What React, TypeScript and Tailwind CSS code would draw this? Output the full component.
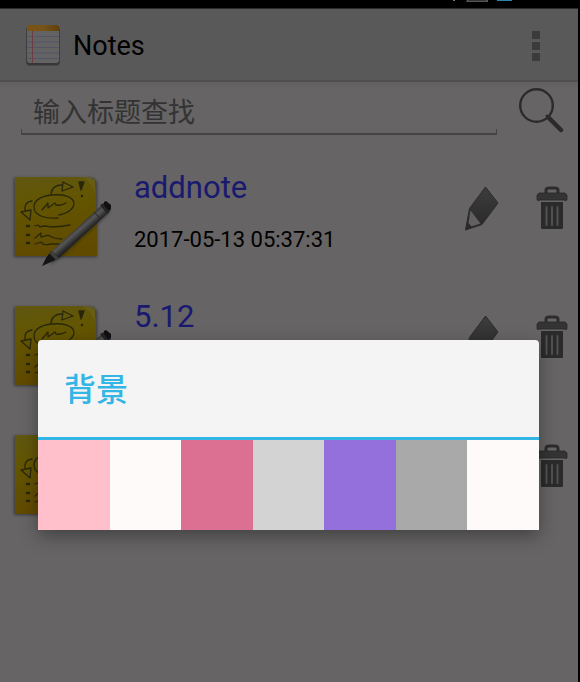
import React from 'react';

type Note = { id: number; title?: string; date?: string };

const notes: Note[] = [
  { id: 1, title: 'addnote', date: '2017-05-13 05:37:31' },
  { id: 2, title: '5.12' },
  { id: 3 },
];

const swatches = [
  { id: 'pink', color: 'bg-[#ffc0cb]' },
  { id: 'snow', color: 'bg-[#fffafa]' },
  { id: 'rose', color: 'bg-[#db7093]' },
  { id: 'light-gray', color: 'bg-[#d3d3d3]' },
  { id: 'purple', color: 'bg-[#9370db]' },
  { id: 'gray', color: 'bg-[#a9a9a9]' },
  { id: 'default', color: 'bg-[#fffafa]' },
];

function StatusBar() {
  return (
    <div className="flex h-[9px] justify-end border-b border-[#2a2a2a] bg-black pr-16">
      <svg width="64" height="3" viewBox="0 0 64 3" aria-hidden="true">
        <path d="M3 0h2v1H3z" fill="#777" />
        <path d="M17 0h21v2H16z" fill="#555" />
        <path d="M19 0h17v1H18z" fill="#333" />
        <path d="M47 0h15v1H47z" fill="#2a85a8" />
      </svg>
    </div>
  );
}

function AppIcon() {
  return (
    <svg width="36" height="44" viewBox="0 0 36 44" aria-hidden="true">
      <defs>
        <linearGradient id="binding" x1="0" x2="1" y1="0" y2="0">
          <stop offset="0" stopColor="#7a5410" />
          <stop offset="0.5" stopColor="#76531a" />
          <stop offset="1" stopColor="#60400d" />
        </linearGradient>
      </defs>
      <rect x="1" y="3" width="34" height="39" rx="4" fill="#484848" />
      <rect x="1.5" y="2" width="33" height="39" rx="3" fill="#303030" opacity="0.7" />
      <rect x="2" y="2" width="32" height="37" rx="3" fill="#636363" />
      <path d="M2 7V4q0-3 3-3h26q3 0 3 3v3z" fill="url(#binding)" />
      <path d="M2 12.500h32M2 18h32M2 23.500h32M2 29h32M2 34.500h32" stroke="#545468" strokeWidth="1" />
      <path d="M7.500 7v32" stroke="#6c3c42" strokeWidth="1" />
    </svg>
  );
}

function NoteIcon() {
  return (
    <svg width="110" height="100" viewBox="0 0 110 100" aria-hidden="true">
      <defs>
        <linearGradient id="paper" x1="0" x2="0.15" y1="0" y2="1">
          <stop offset="0" stopColor="#605711" />
          <stop offset="0.4" stopColor="#635500" />
          <stop offset="1" stopColor="#604a00" />
        </linearGradient>
        <linearGradient id="barrel" gradientUnits="userSpaceOnUse" x1="68" y1="60" x2="75" y2="68">
          <stop offset="0" stopColor="#303030" />
          <stop offset="0.4" stopColor="#565656" />
          <stop offset="1" stopColor="#222" />
        </linearGradient>
        <filter id="soft" x="-10%" y="-10%" width="120%" height="125%">
          <feGaussianBlur stdDeviation="1.5" />
        </filter>
      </defs>
      <path d="M6 11h79l4 4v75H6z" fill="#333" opacity="0.85" filter="url(#soft)" />
      <path d="M7 10h68q11 0 12 4 2 36 2 75H7z" fill="url(#paper)" />
      <path d="M74 10q11 0 13 4l1 16q-3-14-14-20z" fill="#6d6420" opacity="0.5" />
      <g fill="none" stroke="#29270b" strokeWidth="1.300" strokeLinecap="round" strokeLinejoin="round">
        <path d="M51 48q14-3 15-11c0-8-12-10-22-9-12 1-18 6-18 12 0 9 12 12 24 11" />
        <path d="M34 43l6-7v5l7-5 1 2q5 1 10-2M43 27q1-9 11-9" />
        <path d="M55 15l10 5-11 4zM24 34q-8 1-7 9M13 45l10-2-1 10z" />
        <path d="M27 59l3-1 2 2q5-2 10 0 10 0 20-2M27 71l6-5v4l7-2q6 4 14 4M27 77l6-2q2 4 9 2h9" />
        <path d="M19 59h2M19 68h2M19 76h2" strokeWidth="2.500" />
        <path d="M71 15h5l-3 8z" fill="#29270b" />
        <path d="M74 29h0" strokeWidth="2.500" />
      </g>
      <path d="M44 88l52-48 6 5-50 46-9 6z" fill="#171717" opacity="0.6" filter="url(#soft)" />
      <path d="M44 84l50-46 7 7-50 46z" fill="url(#barrel)" />
      <path d="M86 45l7 7" stroke="#242424" strokeWidth="1" />
      <path d="M92 38l4-2 7 7-4 4z" fill="#242424" />
      <path d="M96 35l2-1 5 4v4l-3 1-4-5z" fill="#101010" />
      <path d="M43 84l8 7-8 4-9 4 4-8z" fill="#141414" />
      <path d="M43 84l8 7-3 2-7-7z" fill="#3e3e3e" />
    </svg>
  );
}

function PencilIcon() {
  return (
    <svg width="36" height="48" viewBox="0 0 36 48" aria-hidden="true">
      <defs>
        <linearGradient id="metal" x1="0" x2="0" y1="0" y2="1">
          <stop offset="0" stopColor="#3d3d3d" />
          <stop offset="1" stopColor="#282828" />
        </linearGradient>
      </defs>
      <path d="M21.500 2L34 18 18 39.500 1.500 45 5.500 23.500z" fill="url(#metal)" stroke="#2b2b2b" strokeLinejoin="round" />
      <path d="M6.500 25.500L16.500 38.500l-9 3-3-3.500z" fill="#626060" />
    </svg>
  );
}

function TrashIcon() {
  return (
    <svg width="32" height="46" viewBox="0 0 32 46" aria-hidden="true">
      <path d="M10 9V5.500Q10 3 13 3h6q3 0 3 2.500V9" fill="none" stroke="#2d2d2d" strokeWidth="3" />
      <path d="M3 8h26l2 2v5q-1 1-3 0H4q-2 1-3 0v-5z" fill="#343434" stroke="#292929" strokeWidth="0.8" />
      <path d="M5 17h22v26q0 1-1 1H6q-1 0-1-1z" fill="#2b2b2b" />
      <path d="M10.500 22v18M16 22v18M21.500 22v18" stroke="#525151" strokeWidth="2" strokeLinecap="round" />
    </svg>
  );
}

function SearchIcon() {
  return (
    <svg width="46" height="48" viewBox="0 0 46 48" fill="none" stroke="#2b2b2b" strokeLinecap="round" aria-hidden="true">
      <circle cx="18.500" cy="18.500" r="16.300" strokeWidth="2.400" />
      <path d="M31 31l12 12" strokeWidth="4.500" />
      <path d="M29 29l3 3" strokeWidth="3" />
    </svg>
  );
}

function NoteRow({ note }: { note: Note }) {
  return (
    <li className="flex h-[129px] items-start pr-[10px]">
      <div className="ml-2 mt-[10px] shrink-0">
        <NoteIcon />
      </div>
      <div className="ml-4 mt-[13px] min-w-0 flex-1">
        {note.title && <h2 className="text-[31px] leading-9 text-[#191970]">{note.title}</h2>}
        {note.date && <p className="mt-[18px] text-[22px] leading-8 text-black">{note.date}</p>}
      </div>
      <button type="button" aria-label="Edit" className="mt-7">
        <PencilIcon />
      </button>
      <button type="button" aria-label="Delete" className="ml-9 mt-7">
        <TrashIcon />
      </button>
    </li>
  );
}

function BackgroundDialog() {
  return (
    <div
      role="dialog"
      aria-labelledby="dialog-title"
      className="absolute left-[38px] right-[39px] top-[340px] overflow-hidden rounded-t-sm bg-[#f4f4f4] shadow-[0_6px_18px_rgba(0,0,0,0.35)]"
    >
      <h2
        id="dialog-title"
        className="flex h-[100px] items-center border-b-[3px] border-[#33b5e5] px-[26px] pt-[2px] text-[32px] font-medium text-[#33b5e5]"
      >
        背景
      </h2>
      <div className="flex h-[90px]">
        {swatches.map((s) => (
          <button key={s.id} type="button" aria-label={s.id} className={`flex-1 ${s.color}`} />
        ))}
      </div>
    </div>
  );
}

export default function App() {
  return (
    <div className="relative min-h-screen border-r-2 border-black bg-[#666464] font-[Roboto,'Noto_Sans_CJK_SC',sans-serif]">
      <StatusBar />
      <header className="flex h-[73px] items-center border-b-2 border-[#504e4e] bg-[#595959] pl-[25px] pr-[30px] pt-[2px]">
        <AppIcon />
        <h1 className="ml-3 flex-1 text-[27px] leading-8 text-black">Notes</h1>
        <button type="button" aria-label="Menu" className="flex w-6 flex-col items-center gap-[3px]">
          <span className="size-2 bg-[#3b3b3b]" />
          <span className="size-2 bg-[#3b3b3b]" />
          <span className="size-2 bg-[#3b3b3b]" />
        </button>
      </header>
      <main>
        <div className="flex h-[75px] items-start bg-linear-to-b from-[#615f5f] to-[#666464] to-10% pl-[21px] pr-[14px]">
          <div className="mt-2 min-w-0 flex-1">
            <input
              type="text"
              aria-label="输入标题查找"
              placeholder="输入标题查找"
              className="block h-[39px] w-full bg-transparent px-3 pt-2 text-[27px] text-black outline-none placeholder:text-[#333333]"
            />
            <div className="h-[6px] border-x border-b-2 border-[#444343]" />
          </div>
          <button type="button" aria-label="Search" className="ml-[21px] mt-[5px]">
            <SearchIcon />
          </button>
        </div>
        <ul>
          {notes.map((note) => (
            <NoteRow key={note.id} note={note} />
          ))}
        </ul>
      </main>
      <BackgroundDialog />
    </div>
  );
}
